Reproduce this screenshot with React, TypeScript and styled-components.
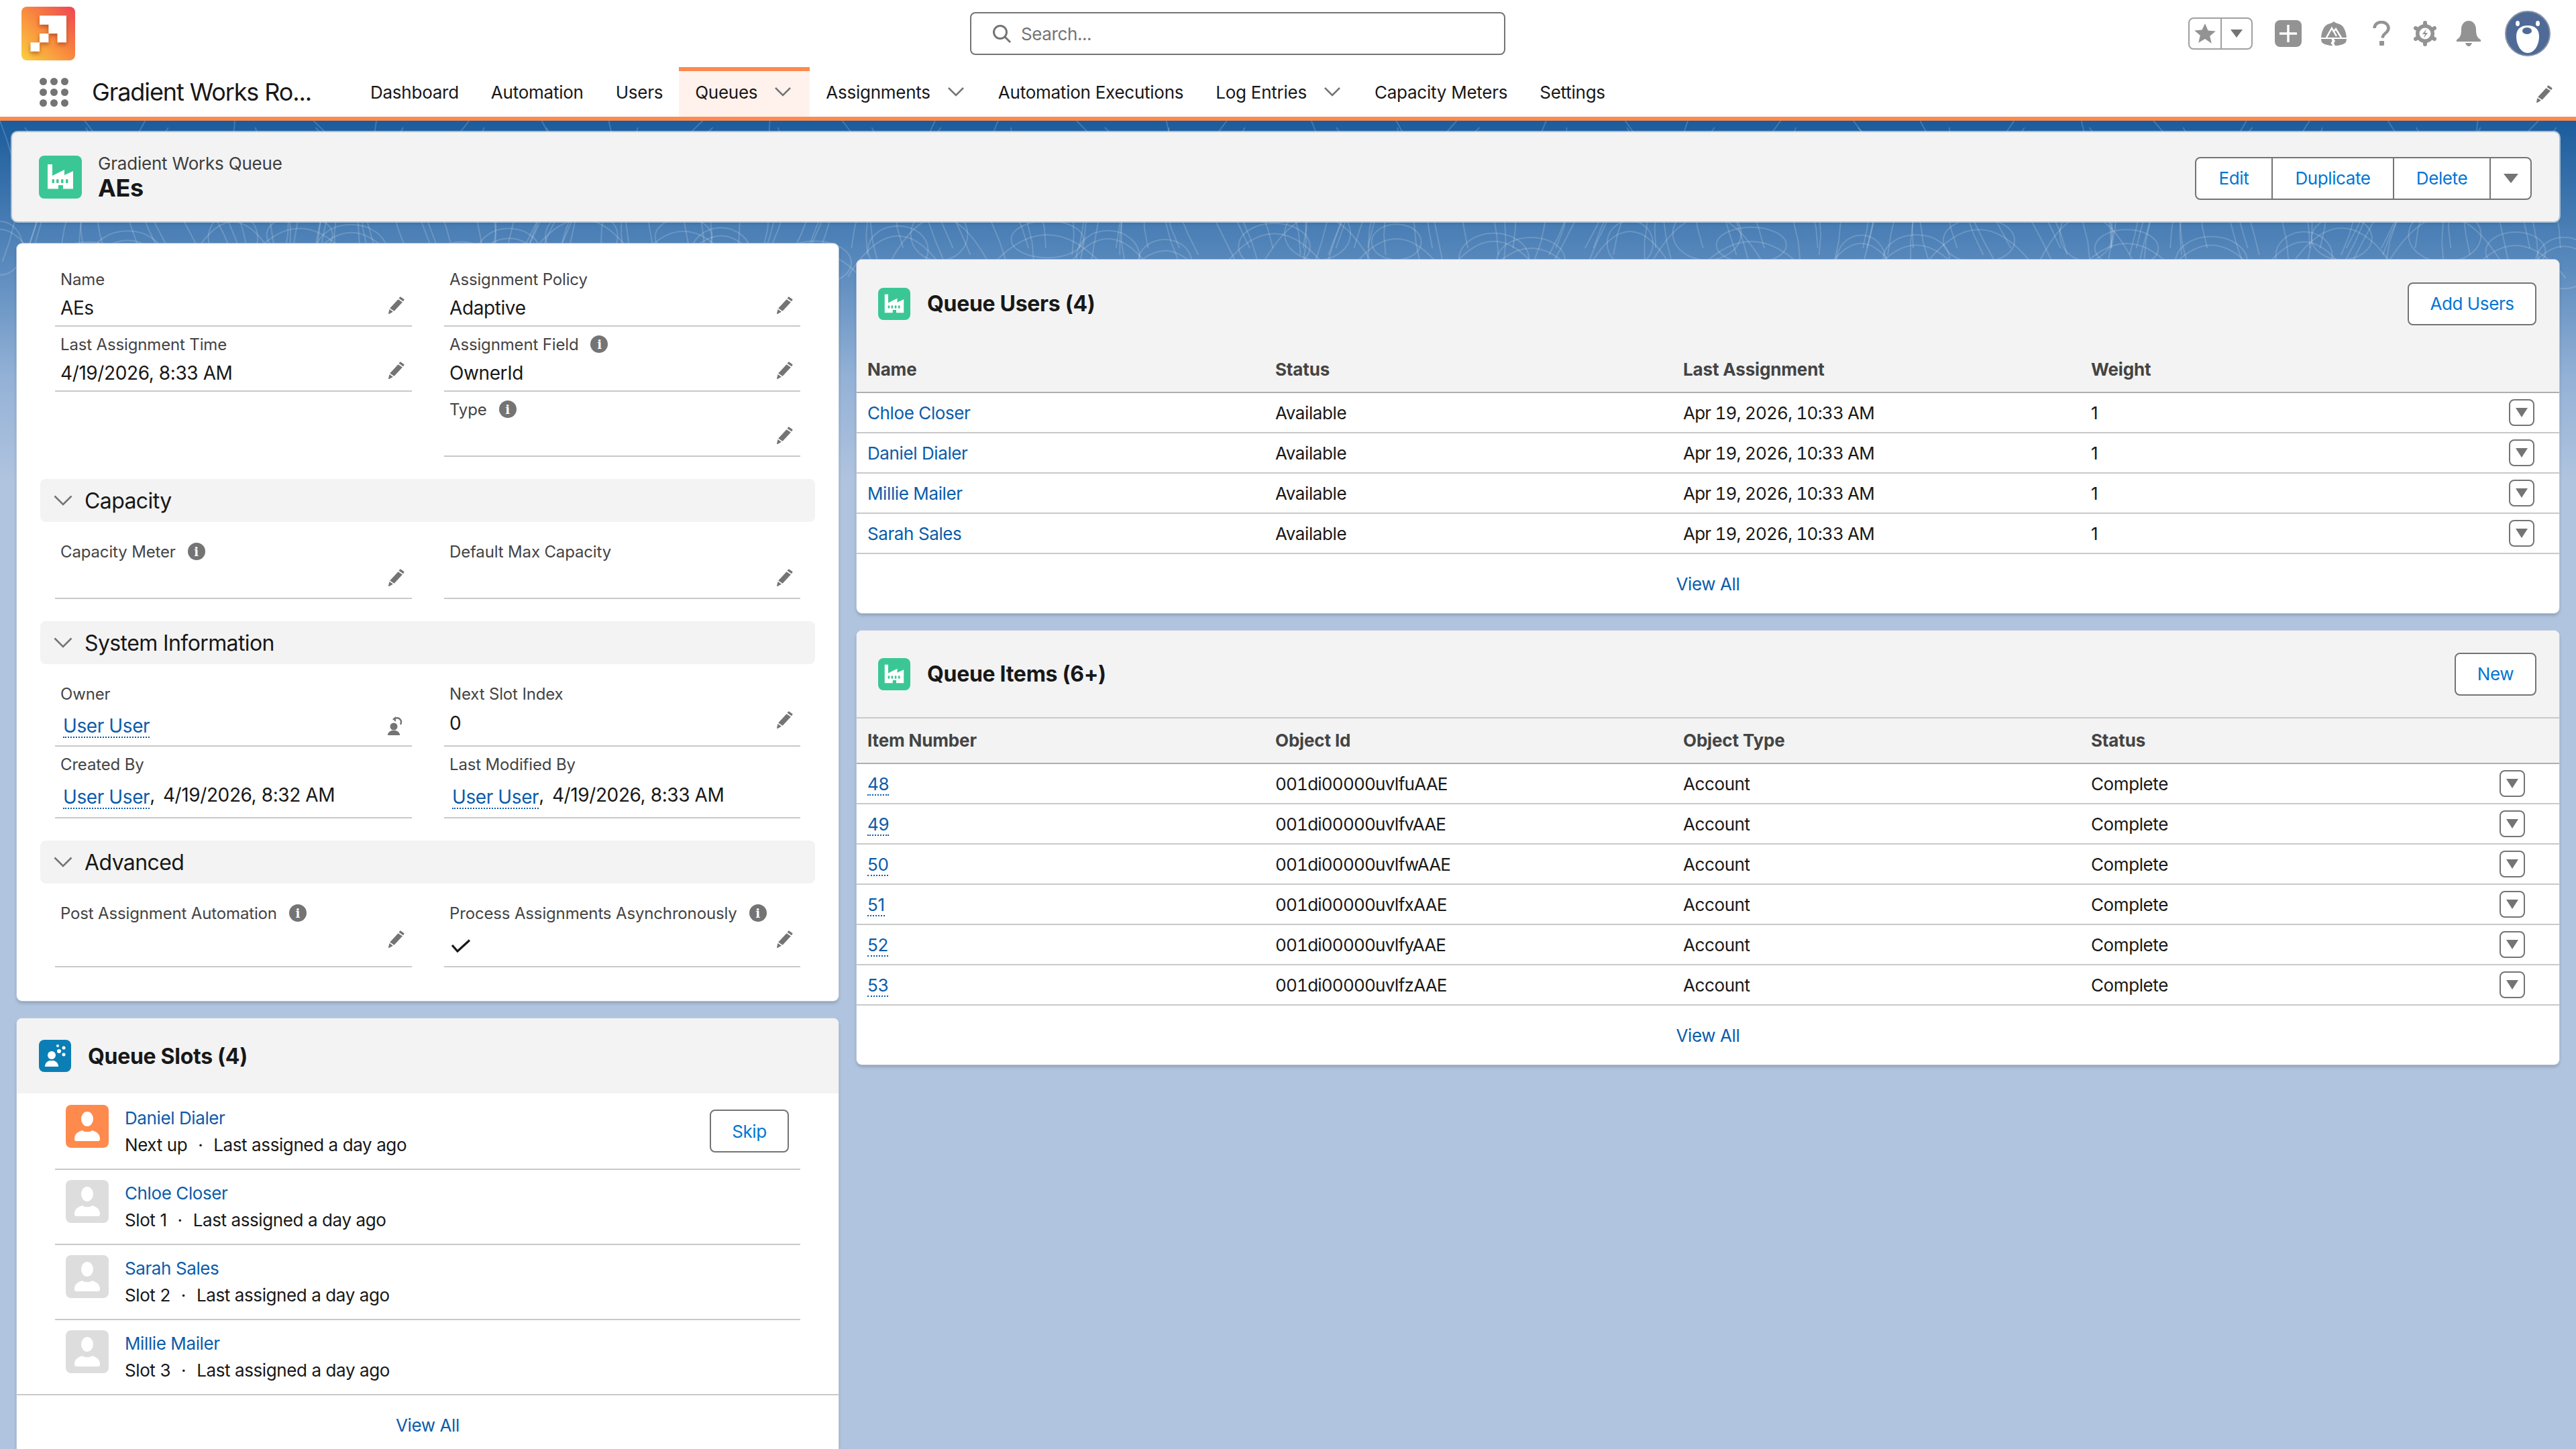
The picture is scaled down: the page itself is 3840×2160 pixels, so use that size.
import React from "react";
import styled, { createGlobalStyle } from "styled-components";

const GlobalStyle = createGlobalStyle`
  html, body {
    margin: 0;
    padding: 0;
    background: #b0c4df;
  }
  body {
    font-family: Inter, "Noto Sans", "Liberation Sans", sans-serif;
    font-size: 26px;
    color: #181818;
    letter-spacing: -0.4px;
  }
  * {
    box-sizing: border-box;
  }
`;

const Page = styled.div`
  position: relative;
  width: 3840px;
  height: 2160px;
  overflow: hidden;
  background: linear-gradient(#1b5c9c 180px, #5b8bbe 400px, #93b1d6 560px, #b0c4df 720px);
`;

const Contours = styled.svg`
  position: absolute;
  left: 0;
  top: 180px;
  width: 3840px;
  height: 520px;
  pointer-events: none;
`;

const Shell = styled.div`
  position: relative;
`;

const GlobalHeader = styled.header`
  display: grid;
  grid-template-columns: 1446px 798px 1fr;
  align-items: center;
  height: 100px;
  background: #fff;
`;

const Logo = styled.svg`
  display: block;
  width: 80px;
  height: 80px;
  margin-left: 32px;
`;

const SearchBox = styled.div`
  display: flex;
  align-items: center;
  gap: 14px;
  height: 64px;
  padding-left: 30px;
  border: 2px solid #747474;
  border-radius: 8px;
  background: #fff;
  color: #747474;
`;

const HeaderActions = styled.div`
  display: flex;
  align-items: center;
  justify-content: flex-end;
  padding-right: 38px;
`;

const FavoriteGroup = styled.div`
  display: flex;
  height: 48px;
  border: 2px solid #a0a0a0;
  border-radius: 8px;
`;

const FavoritePart = styled.div<{ $w: number; $split?: boolean }>`
  display: flex;
  align-items: center;
  justify-content: center;
  width: ${(p) => p.$w}px;
  border-left: ${(p) => (p.$split ? "2px solid #a0a0a0" : "none")};
`;

const HeaderIcon = styled.svg<{ $ml: number }>`
  display: block;
  margin-left: ${(p) => p.$ml}px;
`;

const NavBar = styled.nav`
  display: flex;
  align-items: flex-start;
  height: 80px;
  border-bottom: 6px solid #fe8a4d;
  background: #fff;
`;

const Launcher = styled.div`
  display: grid;
  grid-template-columns: repeat(3, 16px);
  grid-auto-rows: 16px;
  width: 48px;
  margin: 13px 0 0 56px;
`;

const LauncherDot = styled.span`
  display: block;
  width: 11px;
  height: 11px;
  margin: 2.5px;
  border-radius: 50%;
  background: #747474;
`;

const AppName = styled.div`
  width: 391px;
  margin-left: 33px;
  line-height: 74px;
  font-size: 36px;
  letter-spacing: -1.1px;
`;

const NavTab = styled.a<{ $active?: boolean; $menu?: boolean }>`
  display: flex;
  align-items: center;
  height: 74px;
  padding: ${(p) => (p.$active ? "0 28px 6px 24px" : p.$menu ? "0 27px 0 24px" : "0 24px")};
  border-top: ${(p) => (p.$active ? "6px solid #fe8a4d" : "none")};
  background: ${(p) => (p.$active ? "#fff2ec" : "transparent")};
  color: #181818;
  letter-spacing: -0.25px;
`;

const NavChevron = styled.svg`
  display: block;
  width: 24px;
  height: 14px;
  margin-left: 26px;
`;

const NavEdit = styled.svg`
  display: block;
  margin: 26px 34px 0 auto;
`;

const Content = styled.main`
  padding: 17px 25px 0 18px;
`;

const Highlights = styled.section`
  display: flex;
  align-items: center;
  height: 133px;
  padding: 0 41px 0 40px;
  border-radius: 8px;
  background: #f3f3f3;
  box-shadow: 0 0 0 2px rgba(205, 222, 232, 0.75), 0 3px 4px rgba(0, 0, 0, 0.14);
`;

const IconTile = styled.div<{ $size: number; $color: string }>`
  display: flex;
  flex: none;
  align-items: center;
  justify-content: center;
  width: ${(p) => p.$size}px;
  height: ${(p) => p.$size}px;
  border-radius: 8px;
  background: ${(p) => p.$color};
`;

const HighlightsText = styled.div`
  margin: 0 0 3px 24px;
`;

const ObjectLabel = styled.div`
  line-height: 36px;
  font-size: 26px;
  letter-spacing: -0.2px;
  color: #3e3e3c;
`;

const RecordTitle = styled.h1`
  margin: 0;
  line-height: 36px;
  font-size: 36px;
  font-weight: 700;
`;

const ButtonGroup = styled.div`
  display: flex;
  height: 64px;
  margin: 4px 0 0 auto;
  border: 2px solid #747474;
  border-radius: 8px;
  background: #fff;
`;

const GroupButton = styled.a<{ $w: number }>`
  display: flex;
  align-items: center;
  justify-content: center;
  width: ${(p) => p.$w}px;
  color: #0176d3;
  & + & {
    border-left: 2px solid #747474;
  }
`;

const Caret = styled.span<{ $w: number; $h: number }>`
  display: block;
  width: 0;
  height: 0;
  border-left: ${(p) => p.$w / 2}px solid transparent;
  border-right: ${(p) => p.$w / 2}px solid transparent;
  border-top: ${(p) => p.$h}px solid #747474;
`;

const Columns = styled.div`
  display: grid;
  grid-template-columns: 1225px 1fr;
  column-gap: 27px;
  align-items: start;
  padding: 33px 0 0 7px;
`;

const Column = styled.div<{ $top?: number }>`
  display: flex;
  flex-direction: column;
  gap: 26px;
  padding-top: ${(p) => p.$top ?? 0}px;
`;

const Card = styled.section`
  overflow: hidden;
  border-radius: 8px;
  background: #fff;
  box-shadow: 0 0 0 1px rgba(200, 210, 225, 0.7), 0 3px 5px rgba(0, 0, 0, 0.22);
`;

const DetailBody = styled.div`
  padding: 27px 35px 50px;
`;

const FieldGrid = styled.div`
  display: grid;
  grid-template-columns: 532px 531px;
  column-gap: 48px;
  margin: 0 22px;
`;

const Field = styled.div<{ $h?: number }>`
  position: relative;
  height: ${(p) => p.$h ?? 97}px;
  padding: 8px 8px 0;
  border-bottom: 2px solid #c9c9c9;
`;

const FieldLabel = styled.div`
  display: flex;
  align-items: center;
  height: 36px;
  font-size: 24px;
  letter-spacing: -0.15px;
  color: #444;
`;

const FieldValue = styled.div<{ $mt?: number }>`
  margin-top: ${(p) => p.$mt ?? 5}px;
  line-height: 40px;
  font-size: 28px;
`;

const AfterLink = styled.span`
  margin-left: 12px;
`;

const CheckMark = styled.svg`
  display: block;
  margin: 21px 0 0 2px;
`;

const InfoDot = styled.span`
  display: flex;
  align-items: center;
  justify-content: center;
  width: 26px;
  height: 26px;
  margin-left: 18px;
  border-radius: 50%;
  background: #747474;
  font-family: "DejaVu Serif", serif;
  font-size: 18px;
  font-weight: 700;
  color: #fff;
`;

const FieldAction = styled.svg`
  position: absolute;
  top: 51px;
  right: 10px;
`;

const RecordLink = styled.a`
  display: inline-block;
  margin-left: 4px;
  line-height: 32px;
  vertical-align: -3px;
  border-bottom: 2px dotted #0b5cab;
  color: #0b5cab;
`;

const SectionBar = styled.div`
  display: flex;
  align-items: center;
  gap: 18px;
  height: 64px;
  margin: 33px 0 18px;
  padding-left: 20px;
  border-radius: 8px;
  background: #f3f3f3;
  font-size: 32px;
  letter-spacing: -0.6px;
`;

const CardHeader = styled.div<{ $h: number; $pl: number; $line?: boolean }>`
  display: flex;
  align-items: center;
  height: ${(p) => p.$h}px;
  padding: 0 34px 0 ${(p) => p.$pl}px;
  background: #f3f3f3;
  border-bottom: ${(p) => (p.$line ? "2px solid #c9c9c9" : "none")};
`;

const CardTitle = styled.h2`
  margin: 0 0 0 25px;
  font-size: 32px;
  font-weight: 700;
  letter-spacing: -0.3px;
`;

const OutlineButton = styled.a<{ $w: number }>`
  display: flex;
  align-items: center;
  justify-content: center;
  width: ${(p) => p.$w}px;
  height: 64px;
  margin-left: auto;
  border: 2px solid #747474;
  border-radius: 8px;
  background: #fff;
  color: #0176d3;
`;

const TableRow = styled.div<{ $head?: boolean; $pr: number }>`
  display: grid;
  grid-template-columns: 608px 608px 608px 1fr auto;
  align-items: center;
  height: ${(p) => (p.$head ? 68 : 60)}px;
  padding: 0 ${(p) => p.$pr}px ${(p) => (p.$head ? 2 : 0)}px 16px;
  background: ${(p) => (p.$head ? "#f3f3f3" : "#fff")};
  border-bottom: 2px solid ${(p) => (p.$head ? "#aeaeae" : "#c9c9c9")};
`;

const HeadCell = styled.div`
  font-weight: 700;
  color: #444;
  letter-spacing: -0.15px;
`;

const NumberCell = styled.div`
  font-variant-numeric: tabular-nums;
  letter-spacing: -0.8px;
`;

const NameLink = styled.a`
  color: #0b5cab;
`;

const NumberLink = styled.a`
  justify-self: start;
  line-height: 30px;
  margin-top: 4px;
  border-bottom: 2px dotted #0b5cab;
  color: #0b5cab;
`;

const RowMenu = styled.div`
  display: flex;
  align-items: center;
  justify-content: center;
  width: 38px;
  height: 40px;
  border: 2px solid #747474;
  border-radius: 8px;
  background: #fff;
`;

const CardFooter = styled.div<{ $h: number; $line?: boolean }>`
  display: flex;
  align-items: center;
  justify-content: center;
  height: ${(p) => p.$h}px;
  border-top: ${(p) => (p.$line ? "2px solid #c9c9c9" : "none")};
  color: #0b5cab;
`;

const SlotList = styled.div`
  margin: 0 57px;
`;

const SlotRow = styled.div`
  display: flex;
  align-items: flex-start;
  gap: 24px;
  height: 112px;
  padding: 17px 17px 0 16px;
  & + & {
    padding-top: 15px;
    border-top: 2px solid #c9c9c9;
  }
`;

const SlotAvatar = styled.div<{ $next?: boolean }>`
  display: flex;
  flex: none;
  align-items: center;
  justify-content: center;
  width: 64px;
  height: 64px;
  border-radius: 8px;
  background: ${(p) => (p.$next ? "#fe8a4d" : "#dddddd")};
`;

const SlotText = styled.div`
  line-height: 40px;
`;

const SlotDot = styled.span`
  margin: 0 16px;
`;

const SlotSkip = styled(OutlineButton)`
  margin-top: 7px;
`;

const contourPaths = (() => {
  const paths: string[] = [];
  for (let i = 0; i < 170; i++) {
    const x0 = i * 23 + 14 * Math.sin(i * 1.7);
    const phase = i * 0.37;
    const top = 10 * (i % 5);
    let d = `M${x0.toFixed(1)} ${top}`;
    for (let y = top + 30; y <= 210; y += 30) {
      const x = x0 + 26 * Math.sin(y / 70 + phase) + 18 * Math.sin(i * 0.11) * (y / 100);
      d += ` L${x.toFixed(1)} ${y}`;
    }
    paths.push(d);
  }
  for (let i = 0; i < 36; i++) {
    const cx = i * 110 + 30 * Math.sin(i * 2.3);
    const cy = 190 + 22 * Math.sin(i * 1.3);
    const rx = 34 + 20 * Math.abs(Math.sin(i));
    const ry = 26 + 14 * Math.abs(Math.cos(i * 1.9));
    paths.push(`M${cx - rx} ${cy} a${rx} ${ry} 0 1 1 ${rx * 2} 0 a${rx} ${ry} 0 1 1 ${-rx * 2} 0`);
    paths.push(`M${cx - rx - 30} ${cy + 40} q${rx + 30} ${-ry * 3.4} ${rx * 2 + 60} 0`);
  }
  return paths;
})();

const FieldPencil = () => (
  <FieldAction width="28" height="28" viewBox="0 0 28 28" fill="#747474">
    <path d="M21.2 1.6l5 3.4c.4.3.5.8.2 1.2l-1.4 2-6.4-4.4 1.4-2c.3-.4.8-.5 1.2-.2z" />
    <path d="M17.5 5.2l6.4 4.4L11.6 22.8l-6.4-4.4z" />
    <path d="M4.5 20l5.4 3.7-5.7 3.3c-.6.3-1.3-.2-1.2-.8z" />
  </FieldAction>
);

const OwnerChange = () => (
  <FieldAction width="28" height="38" viewBox="0 0 28 38" fill="#747474">
    <circle cx="11" cy="24" r="5.5" />
    <path d="M2 37c0-4 3-6 6-7h6c3 1 6 3 6 7z" />
    <path d="M12 13c3-3 7-2 9 1 1.400 2 1 5 0 7" fill="none" stroke="#747474" strokeWidth="2.4" />
    <path d="M14 9l-5 4 5 4z" />
  </FieldAction>
);

const Chevron = () => (
  <svg width="28" height="16" viewBox="0 0 28 16" fill="none" stroke="#747474" strokeWidth="2.6">
    <path d="M1.500 1.500L14 14 26.500 1.500" />
  </svg>
);

const Factory = ({ size }: { size: number }) => (
  <svg width={size} height={size} viewBox="0 0 64 64" fill="#fff">
    <path d="M13 13H20V30L38 21V29L51 23V49.500H36V44H29V49.500H13Z" />
    <g fill="#3bc795">
      <rect x="19.500" y="35" width="3.500" height="6" rx="1.500" />
      <rect x="26" y="35" width="3.500" height="6" rx="1.500" />
      <rect x="33" y="35" width="3.500" height="6" rx="1.500" />
      <rect x="40" y="35" width="3.500" height="6" rx="1.500" />
    </g>
  </svg>
);

const SlotPerson = () => (
  <svg width="40" height="46" viewBox="0 0 40 46" fill="#fff">
    <ellipse cx="20" cy="12" rx="9" ry="11" />
    <path d="M1 42c0-8 5-11 12-13 2 3 12 3 14 0 7 2 12 5 12 13 0 2-1 3-3 3H4c-2 0-3-1-3-3z" />
  </svg>
);

const NavCaret = () => (
  <NavChevron viewBox="0 0 24 14" fill="none" stroke="#747474" strokeWidth="2.500">
    <path d="M1 1l11 11L23 1" />
  </NavChevron>
);

const people = [
  { name: "Chloe Closer" },
  { name: "Daniel Dialer" },
  { name: "Millie Mailer" },
  { name: "Sarah Sales" },
];

const items = [
  { no: "48", id: "001di00000uvIfuAAE" },
  { no: "49", id: "001di00000uvIfvAAE" },
  { no: "50", id: "001di00000uvIfwAAE" },
  { no: "51", id: "001di00000uvIfxAAE" },
  { no: "52", id: "001di00000uvIfyAAE" },
  { no: "53", id: "001di00000uvIfzAAE" },
];

const slots = [
  { name: "Daniel Dialer", label: "Next up", next: true },
  { name: "Chloe Closer", label: "Slot 1" },
  { name: "Sarah Sales", label: "Slot 2" },
  { name: "Millie Mailer", label: "Slot 3" },
];

const App = () => {
  return (
    <Page>
      <GlobalStyle />
      <Contours viewBox="0 0 3840 520" fill="none" stroke="rgba(255,255,255,0.17)" strokeWidth="2">
        {contourPaths.map((d, i) => (
          <path key={i} d={d} />
        ))}
      </Contours>
      <Shell>
        <GlobalHeader>
          <Logo viewBox="0 0 80 80">
            <defs>
              <linearGradient id="logoFill" x1="0" y1="1" x2="1" y2="0">
                <stop offset="0" stopColor="#f9d040" />
                <stop offset="0.5" stopColor="#f98a3e" />
                <stop offset="1" stopColor="#ee4553" />
              </linearGradient>
            </defs>
            <rect width="80" height="80" rx="8" fill="url(#logoFill)" />
            <path
              d="M27 13.300H67V53.300H53.500V40H40.400V26.700H27zM27 40H40.400V53.300H27zM13.500 53.300H27V66.700H13.500z"
              fill="#fff"
              style={{ filter: "drop-shadow(0 3px 3px rgba(140,40,10,0.55))" }}
            />
          </Logo>
          <SearchBox>
            <svg width="30" height="30" viewBox="0 0 30 30" fill="none" stroke="#747474" strokeWidth="3">
              <circle cx="13" cy="13" r="9.500" />
              <path d="M20 20l8 8" />
            </svg>
            Search...
          </SearchBox>
          <HeaderActions>
            <FavoriteGroup>
              <FavoritePart $w={46}>
                <svg width="32" height="32" viewBox="0 0 32 32" fill="#939393">
                  <path d="M16 1l4.500 10.400 11.300 1-8.600 7.400 2.600 11L16 24.100 6.200 29.800l2.600-11L.2 11.400l11.300-1z" />
                </svg>
              </FavoritePart>
              <FavoritePart $w={46} $split>
                <Caret $w={18} $h={12} />
              </FavoritePart>
            </FavoriteGroup>
            <HeaderIcon $ml={33} width="40" height="40" viewBox="0 0 40 40">
              <rect width="40" height="40" rx="8" fill="#939393" />
              <path d="M20 7v26M7 20h26" stroke="#fff" strokeWidth="3.500" />
            </HeaderIcon>
            <HeaderIcon $ml={29} width="38" height="36" viewBox="0 0 38 36" fill="#939393">
              <path d="M19 0c3 3 7 3 10.500 5C34 8 37 14 38 24H0C1 14 4 8 8.500 5 12 3 16 3 19 0z" />
              <path d="M0 26h15.500l1 3-2 3.500 3 3.500C11 36 5 34 2 32 .8 31 .2 29 0 26zM19 26h19c-.2 3-.8 5-2 6-3 2-8 4-15 4l-2-3.500 2-3.500z" />
              <path d="M8 24l8-14 7 12M18 16l4-5 8 13" fill="none" stroke="#fff" strokeWidth="2.400" />
            </HeaderIcon>
            <HeaderIcon $ml={39} width="26" height="38" viewBox="0 0 26 38" fill="none">
              <path d="M2.500 11C2.500 5.500 7 2 13 2s10.500 4 10.500 9c0 7-8 7-9 14.500" stroke="#939393" strokeWidth="4.500" />
              <rect x="10" y="30" width="7" height="7" rx="1" fill="#939393" />
            </HeaderIcon>
            <HeaderIcon $ml={34} width="36" height="38" viewBox="0 0 36 38" fill="#939393">
              <g stroke="#939393" strokeWidth="6" strokeLinecap="round">
                <path d="M18 3v32M4 11l28 16M4 27L32 11" />
              </g>
              <circle cx="18" cy="19" r="14" />
              <circle cx="18" cy="19" r="8.500" fill="#fff" />
              <path d="M20 12l-6 8h4l-2 6 6-8h-4z" />
            </HeaderIcon>
            <HeaderIcon $ml={28} width="38" height="38" viewBox="0 0 38 38" fill="#939393">
              <path d="M19 0c7 0 11 6 11 13 0 9 2 12 6.500 15 1.500 1 1 3-1 3H2.500c-2 0-2.500-2-1-3C6 25 8 22 8 13 8 6 12 0 19 0z" />
              <path d="M14 33h10c-1 3-3 5-5 5s-4-2-5-5z" />
            </HeaderIcon>
            <HeaderIcon $ml={35} width="68" height="68" viewBox="0 0 68 68">
              <circle cx="34" cy="34" r="33" fill="#4f6a97" stroke="#8a93a3" strokeWidth="2" />
              <ellipse cx="19" cy="19" rx="3" ry="4" fill="#fff" />
              <ellipse cx="49" cy="19" rx="3" ry="4" fill="#fff" />
              <path d="M34 22c11 0 17 6 17 16 0 13-7 25-17 25S17 51 17 38c0-10 6-16 17-16z" fill="#fff" />
              <ellipse cx="33" cy="30" rx="7" ry="5" fill="#4f6a97" />
            </HeaderIcon>
          </HeaderActions>
        </GlobalHeader>
        <NavBar>
          <Launcher>
            {Array.from({ length: 9 }).map((_, i) => (
              <LauncherDot key={i} />
            ))}
          </Launcher>
          <AppName>Gradient Works Ro...</AppName>
          <NavTab>Dashboard</NavTab>
          <NavTab>Automation</NavTab>
          <NavTab>Users</NavTab>
          <NavTab $active>
            Queues
            <NavCaret />
          </NavTab>
          <NavTab $menu>
            Assignments
            <NavCaret />
          </NavTab>
          <NavTab>Automation Executions</NavTab>
          <NavTab $menu>
            Log Entries
            <NavCaret />
          </NavTab>
          <NavTab>Capacity Meters</NavTab>
          <NavTab>Settings</NavTab>
          <NavEdit width="28" height="28" viewBox="0 0 28 28" fill="#747474">
            <path d="M21.2 1.6l5 3.4c.4.3.5.8.2 1.2l-1.4 2-6.4-4.400 1.400-2c.3-.4.8-.5 1.200-.2z" />
            <path d="M17.500 5.200l6.400 4.400L11.600 22.800l-6.400-4.400z" />
            <path d="M4.500 20l5.400 3.700-5.700 3.300c-.6.3-1.300-.2-1.200-.8z" />
          </NavEdit>
        </NavBar>
        <Content>
          <Highlights>
            <IconTile $size={64} $color="#3bc795">
              <Factory size={64} />
            </IconTile>
            <HighlightsText>
              <ObjectLabel>Gradient Works Queue</ObjectLabel>
              <RecordTitle>AEs</RecordTitle>
            </HighlightsText>
            <ButtonGroup>
              <GroupButton $w={112}>Edit</GroupButton>
              <GroupButton $w={181}>Duplicate</GroupButton>
              <GroupButton $w={144}>Delete</GroupButton>
              <GroupButton $w={61}>
                <Caret $w={22} $h={14} />
              </GroupButton>
            </ButtonGroup>
          </Highlights>
          <Columns>
            <Column>
              <Card>
                <DetailBody>
                  <FieldGrid>
                    <Field>
                      <FieldLabel>Name</FieldLabel>
                      <FieldValue>AEs</FieldValue>
                      <FieldPencil />
                    </Field>
                    <Field>
                      <FieldLabel>Assignment Policy</FieldLabel>
                      <FieldValue>Adaptive</FieldValue>
                      <FieldPencil />
                    </Field>
                    <Field>
                      <FieldLabel>Last Assignment Time</FieldLabel>
                      <FieldValue>4/19/2026, 8:33 AM</FieldValue>
                      <FieldPencil />
                    </Field>
                    <Field>
                      <FieldLabel>
                        Assignment Field
                        <InfoDot>i</InfoDot>
                      </FieldLabel>
                      <FieldValue>OwnerId</FieldValue>
                      <FieldPencil />
                    </Field>
                    <div />
                    <Field>
                      <FieldLabel>
                        Type
                        <InfoDot>i</InfoDot>
                      </FieldLabel>
                      <FieldPencil />
                    </Field>
                  </FieldGrid>
                  <SectionBar>
                    <Chevron />
                    Capacity
                  </SectionBar>
                  <FieldGrid>
                    <Field>
                      <FieldLabel>
                        Capacity Meter
                        <InfoDot>i</InfoDot>
                      </FieldLabel>
                      <FieldPencil />
                    </Field>
                    <Field>
                      <FieldLabel>Default Max Capacity</FieldLabel>
                      <FieldPencil />
                    </Field>
                  </FieldGrid>
                  <SectionBar>
                    <Chevron />
                    System Information
                  </SectionBar>
                  <FieldGrid>
                    <Field $h={105}>
                      <FieldLabel>Owner</FieldLabel>
                      <FieldValue $mt={7}>
                        <RecordLink>User User</RecordLink>
                      </FieldValue>
                      <OwnerChange />
                    </Field>
                    <Field $h={105}>
                      <FieldLabel>Next Slot Index</FieldLabel>
                      <FieldValue $mt={6}>0</FieldValue>
                      <FieldPencil />
                    </Field>
                    <Field $h={107}>
                      <FieldLabel>Created By</FieldLabel>
                      <FieldValue $mt={8}>
                        <RecordLink>User User</RecordLink>,<AfterLink>4/19/2026, 8:32 AM</AfterLink>
                      </FieldValue>
                    </Field>
                    <Field $h={107}>
                      <FieldLabel>Last Modified By</FieldLabel>
                      <FieldValue $mt={8}>
                        <RecordLink>User User</RecordLink>,<AfterLink>4/19/2026, 8:33 AM</AfterLink>
                      </FieldValue>
                    </Field>
                  </FieldGrid>
                  <SectionBar>
                    <Chevron />
                    Advanced
                  </SectionBar>
                  <FieldGrid>
                    <Field $h={107}>
                      <FieldLabel>
                        Post Assignment Automation
                        <InfoDot>i</InfoDot>
                      </FieldLabel>
                      <FieldPencil />
                    </Field>
                    <Field $h={107}>
                      <FieldLabel>
                        Process Assignments Asynchronously
                        <InfoDot>i</InfoDot>
                      </FieldLabel>
                      <FieldValue>
                        <CheckMark width="30" height="20" viewBox="0 0 30 20" fill="none" stroke="#181818" strokeWidth="3.200">
                          <path d="M2 9l8 9L28 1.500" />
                        </CheckMark>
                      </FieldValue>
                      <FieldPencil />
                    </Field>
                  </FieldGrid>
                </DetailBody>
              </Card>
              <Card>
                <CardHeader $h={112} $pl={33}>
                  <IconTile $size={48} $color="#0b7fb5">
                    <svg width="40" height="40" viewBox="0 0 40 40" fill="#fff">
                      <circle cx="15" cy="19" r="6" />
                      <path d="M5 36c0-6 4-8 7-9h6c3 1 7 3 7 9z" />
                      <circle cx="26" cy="13" r="3" />
                      <circle cx="33" cy="8" r="2.500" />
                      <circle cx="33" cy="18" r="2.500" />
                      <circle cx="24" cy="5" r="2" />
                    </svg>
                  </IconTile>
                  <CardTitle>Queue Slots (4)</CardTitle>
                </CardHeader>
                <SlotList>
                  {slots.map((s) => (
                    <SlotRow key={s.name}>
                      <SlotAvatar $next={s.next}>
                        <SlotPerson />
                      </SlotAvatar>
                      <SlotText>
                        <NameLink>{s.name}</NameLink>
                        <div>
                          {s.label}
                          <SlotDot>·</SlotDot>
                          Last assigned a day ago
                        </div>
                      </SlotText>
                      {s.next && <SlotSkip $w={118}>Skip</SlotSkip>}
                    </SlotRow>
                  ))}
                </SlotList>
                <CardFooter $h={90} $line>
                  View All
                </CardFooter>
              </Card>
            </Column>
            <Column $top={24}>
              <Card>
                <CardHeader $h={131} $pl={32}>
                  <IconTile $size={48} $color="#3bc795">
                    <Factory size={48} />
                  </IconTile>
                  <CardTitle>Queue Users (4)</CardTitle>
                  <OutlineButton $w={192}>Add Users</OutlineButton>
                </CardHeader>
                <TableRow $head $pr={37}>
                  <HeadCell>Name</HeadCell>
                  <HeadCell>Status</HeadCell>
                  <HeadCell>Last Assignment</HeadCell>
                  <HeadCell>Weight</HeadCell>
                </TableRow>
                {people.map((p) => (
                  <TableRow key={p.name} $pr={37}>
                    <NameLink>{p.name}</NameLink>
                    <div>Available</div>
                    <NumberCell>Apr 19, 2026, 10:33 AM</NumberCell>
                    <div>1</div>
                    <RowMenu>
                      <Caret $w={18} $h={14} />
                    </RowMenu>
                  </TableRow>
                ))}
                <CardFooter $h={88}>View All</CardFooter>
              </Card>
              <Card>
                <CardHeader $h={131} $pl={32} $line>
                  <IconTile $size={48} $color="#3bc795">
                    <Factory size={48} />
                  </IconTile>
                  <CardTitle>Queue Items (6+)</CardTitle>
                  <OutlineButton $w={122}>New</OutlineButton>
                </CardHeader>
                <TableRow $head $pr={51}>
                  <HeadCell>Item Number</HeadCell>
                  <HeadCell>Object Id</HeadCell>
                  <HeadCell>Object Type</HeadCell>
                  <HeadCell>Status</HeadCell>
                </TableRow>
                {items.map((it) => (
                  <TableRow key={it.no} $pr={51}>
                    <NumberLink>{it.no}</NumberLink>
                    <NumberCell>{it.id}</NumberCell>
                    <div>Account</div>
                    <div>Complete</div>
                    <RowMenu>
                      <Caret $w={18} $h={14} />
                    </RowMenu>
                  </TableRow>
                ))}
                <CardFooter $h={88}>View All</CardFooter>
              </Card>
            </Column>
          </Columns>
        </Content>
      </Shell>
    </Page>
  );
};

export default App;
